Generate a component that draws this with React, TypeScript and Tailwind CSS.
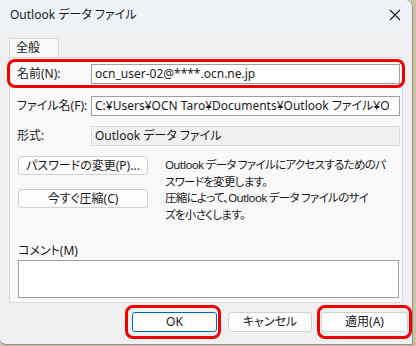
const font = { fontFamily: '"Noto Sans", "Noto Sans CJK JP", sans-serif' }

function Field({ value, readOnly }: { value: string; readOnly?: boolean }) {
  return (
    <div
      className={
        'flex h-[20px] w-[309px] shrink-0 items-center overflow-hidden whitespace-nowrap border px-[3px] text-[12px] text-[#1a1a1a] ' +
        (readOnly ? 'border-[#dadada] bg-[#f0f0f0]' : 'border-[#a0a0a0] bg-white')
      }
    >
      {value}
    </div>
  )
}

function Btn({ label, className = '' }: { label: string; className?: string }) {
  return (
    <button
      className={
        'flex shrink-0 items-center justify-center whitespace-nowrap rounded-[3px] border bg-[#fdfdfd] text-[12px] text-[#1a1a1a] ' +
        className
      }
    >
      {label}
    </button>
  )
}

function Row({ label, children, className = '' }: { label: string; children: React.ReactNode; className?: string }) {
  return (
    <div className={'flex items-center pl-[7px] ' + className}>
      <span className="w-[74px] shrink-0 whitespace-nowrap">{label}</span>
      {children}
    </div>
  )
}

export default function App() {
  return (
    <div className="h-[346px] w-[416px] bg-[#cdc3a2] [font-feature-settings:'palt']" style={font}>
      <div className="flex h-[345px] w-[413px] flex-col overflow-hidden rounded-tr-[8px] rounded-bl-[6px] border-r border-b border-[#8c8c8c] bg-[#f0f0f0]">
        <div className="flex h-[30px] shrink-0 items-center justify-between bg-[#eef3f8] pl-[10px] pr-[9px]">
          <span className="text-[12px] text-[#1a1a1a]">Outlook データ ファイル</span>
          <svg width="12" height="12" viewBox="0 0 12 12" className="mr-[2px]">
            <path d="M1 1L11 11M11 1L1 11" stroke="#1a1a1a" strokeWidth="1.1" />
          </svg>
        </div>

        <div className="flex flex-1 flex-col px-[9px] pt-[8px]">
          <div className="flex h-[19px] w-[50px] items-center border border-b-0 border-[#d9d9d9] bg-[#f9f9f9] pl-[6px] text-[12px] text-[#1a1a1a]">
            全般
          </div>
          <div className="flex h-[246px] flex-col border border-[#d9d9d9] bg-[#f9f9f9] text-[12px] text-[#1a1a1a]">
            <Row
              label="名前(N):"
              className="-ml-[3px] mt-[1px] h-[29px] w-[398px] rounded-[8px] border-[3px] border-[#ee0000]"
            >
              <Field value="ocn_user-02@****.ocn.ne.jp" />
            </Row>
            <Row label="ファイル名(F):" className="mt-[8px]">
              <Field value="C:¥Users¥OCN Taro¥Documents¥Outlook ファイル¥O" />
            </Row>
            <Row label="形式:" className="mt-[10px]">
              <Field value="Outlook データ ファイル" readOnly />
            </Row>
            <div className="mt-[10px] flex items-start pl-[8px]">
              <Btn label="パスワードの変更(P)..." className="h-[19px] w-[130px] border-[#d0d0d0]" />
              <p className="ml-[17px] whitespace-nowrap text-[11.5px] leading-[17px] tracking-[-0.7px]">
                Outlook データ ファイルにアクセスするためのパ
                <br />
                スワードを変更します。
              </p>
            </div>
            <div className="mt-[-1px] flex items-start pl-[8px]">
              <Btn label="今すぐ圧縮(C)" className="h-[19px] w-[130px] border-[#d0d0d0]" />
              <p className="ml-[17px] whitespace-nowrap text-[11.5px] leading-[17px] tracking-[-0.7px]">
                圧縮によって、Outlook データ ファイルのサイ
                <br />
                ズを小さくします。
              </p>
            </div>
            <div className="mt-[20px] pl-[8px] leading-[16px]">コメント(M)</div>
            <div className="ml-[8px] mt-[1px] h-[38px] w-[381px] border border-[#a0a0a0] bg-white" />
          </div>

          <div className="-mr-[9px] mt-[2px] flex items-center justify-end">
            <div className="rounded-[8px] border-[3px] border-[#ee0000] py-[4px] pl-[4px] pr-[1px]">
              <Btn label="OK" className="h-[20px] w-[85px] border-[#0067c0]" />
            </div>
            <Btn label="キャンセル" className="ml-[7px] h-[20px] w-[84px] border-[#d0d0d0]" />
            <div className="ml-[5px] rounded-[8px] border-[3px] border-[#ee0000] px-[1px] py-[4px]">
              <Btn label="適用(A)" className="h-[20px] w-[87px] border-[#d0d0d0]" />
            </div>
          </div>
        </div>
      </div>
    </div>
  )
}
